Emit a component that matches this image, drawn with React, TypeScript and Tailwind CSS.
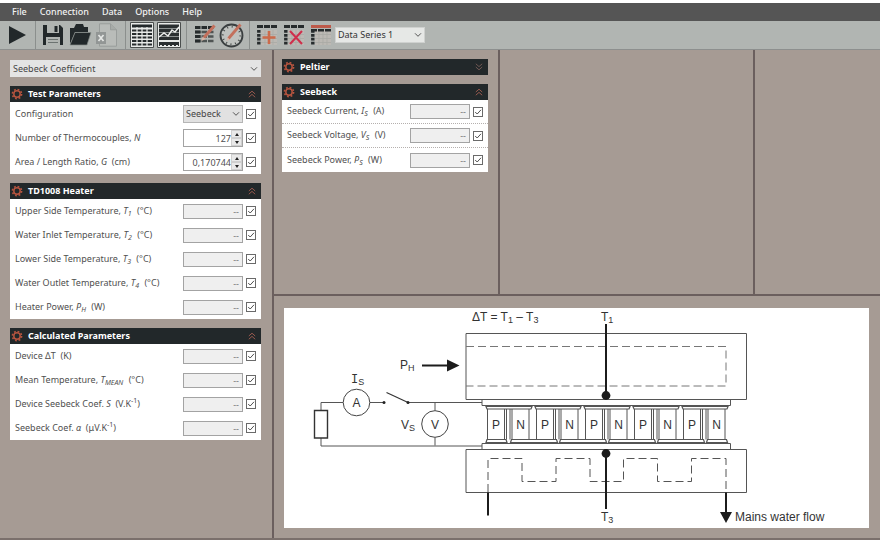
import { useState, type ReactNode } from "react";

const MENU = ["File", "Connection", "Data", "Options", "Help"];

type Row = {
  id: string;
  label: ReactNode;
  name: string;
};

const Sym = ({ children, sub }: { children: ReactNode; sub?: string }) => (
  <i>
    {children}
    {sub && <span className="relative top-[2px] mr-[3px] text-[7px]">{sub}</span>}
  </i>
);

const Sup = ({ children }: { children: ReactNode }) => (
  <span className="relative -top-1 text-[7px]">{children}</span>
);

const HEATER_ROWS: Row[] = [
  { id: "t1", name: "Upper Side Temperature", label: <>Upper Side Temperature, <Sym sub="1">T</Sym> (°C)</> },
  { id: "t2", name: "Water Inlet Temperature", label: <>Water Inlet Temperature, <Sym sub="2">T</Sym> (°C)</> },
  { id: "t3", name: "Lower Side Temperature", label: <>Lower Side Temperature, <Sym sub="3">T</Sym> (°C)</> },
  { id: "t4", name: "Water Outlet Temperature", label: <>Water Outlet Temperature, <Sym sub="4">T</Sym> (°C)</> },
  { id: "ph", name: "Heater Power", label: <>Heater Power, <Sym sub="H">P</Sym> (W)</> },
];

const CALCULATED_ROWS: Row[] = [
  { id: "dt", name: "Device ΔT", label: <>Device ΔT  (K)</> },
  { id: "tmean", name: "Mean Temperature", label: <>Mean Temperature, <Sym sub="MEAN">T</Sym> (°C)</> },
  { id: "s", name: "Device Seebeck Coef.", label: <>Device Seebeck Coef. <Sym>S</Sym>  (V.K<Sup>-1</Sup>)</> },
  { id: "alpha", name: "Seebeck Coef.", label: <>Seebeck Coef. <Sym>α</Sym>  (μV.K<Sup>-1</Sup>)</> },
];

const SEEBECK_ROWS: Row[] = [
  { id: "is", name: "Seebeck Current", label: <>Seebeck Current, <Sym sub="S">I</Sym> (A)</> },
  { id: "vs", name: "Seebeck Voltage", label: <>Seebeck Voltage, <Sym sub="S">V</Sym> (V)</> },
  { id: "ps", name: "Seebeck Power", label: <>Seebeck Power, <Sym sub="S">P</Sym> (W)</> },
];

/* ---------- small controls ---------- */

function Chevron() {
  return (
    <svg viewBox="0 0 8 5" className="pointer-events-none absolute top-1/2 right-[3px] h-[5px] w-2 -translate-y-1/2" fill="none" stroke="#555" strokeWidth="1">
      <path d="M1 .8 4 3.8 7 .8" />
    </svg>
  );
}

function Check({ name }: { name: string }) {
  return (
    <span className="relative ml-[3px] h-[10px] w-[10px] shrink-0">
      <input
        type="checkbox"
        defaultChecked
        aria-label={`Show ${name}`}
        className="peer block h-[10px] w-[10px] appearance-none border border-[#6a6a6a] bg-white"
      />
      <svg viewBox="0 0 10 10" className="pointer-events-none absolute inset-0 hidden h-[10px] w-[10px] peer-checked:block" fill="none" stroke="#505050" strokeWidth="1">
        <path d="M2.2 5 4.2 7 8 2.8" />
      </svg>
    </span>
  );
}

function Line({ id, label, name, dotted, children }: Row & { dotted?: boolean; children?: ReactNode }) {
  return (
    <div className={`flex h-6 items-center px-[5px] ${dotted ? "border-b border-dotted border-[#b5b0ae] last:border-b-0" : ""}`}>
      <label htmlFor={id} className="flex-1 whitespace-pre text-[#505050]">
        {label}
      </label>
      {children ?? (
        <input
          id={id}
          readOnly
          value="--"
          className="h-[15px] w-[60px] border border-[#a3a3a3] bg-[#efefef] pr-[3px] text-right text-[#777] outline-none"
        />
      )}
      <Check name={name} />
    </div>
  );
}

function Spin({ id, value }: { id: string; value: string }) {
  return (
    <div className="flex h-[18px] w-[60px] items-center border border-[#a3a3a3] bg-white">
      <input id={id} defaultValue={value} className="h-full w-0 flex-1 text-right text-[#505050] outline-none" />
      <div className="flex h-full w-[11px] flex-col bg-[#e9e9e9]">
        <button aria-label="Increase" className="flex flex-1 items-center justify-center border border-[#cfcfcf]">
          <svg viewBox="0 0 4 3" className="h-[3px] w-1"><path d="M0 3 2 0 4 3z" fill="#222" /></svg>
        </button>
        <button aria-label="Decrease" className="flex flex-1 items-center justify-center border border-[#cfcfcf]">
          <svg viewBox="0 0 4 3" className="h-[3px] w-1"><path d="M0 0 2 3 4 0z" fill="#222" /></svg>
        </button>
      </div>
    </div>
  );
}

function Gear() {
  return (
    <svg viewBox="0 0 12 12" className="h-3 w-3" fill="none" stroke="#b5543f">
      <circle cx="6" cy="6" r="3.2" strokeWidth="1.5" />
      <circle cx="6" cy="6" r="4.6" strokeWidth="1.6" strokeDasharray="1.8 1.81" />
    </svg>
  );
}

function Section({ title, open = true, children }: { title: string; open?: boolean; children?: ReactNode }) {
  const [expanded, setExpanded] = useState(open);
  return (
    <section>
      <button
        onClick={() => setExpanded((v) => !v)}
        aria-expanded={expanded}
        className="flex h-4 w-full items-center bg-[#22282a] pr-[5px] pl-px text-left font-bold text-white"
      >
        <Gear />
        <span className="flex-1 pl-[5px]">{title}</span>
        <svg viewBox="0 0 8 8" className={`h-2 w-2 ${expanded ? "" : "rotate-180"}`} fill="none" stroke={expanded ? "#96594e" : "#6f5753"} strokeWidth="1">
          <path d="M.8 4 4 1.2 7.2 4M.8 7.2 4 4.4 7.2 7.2" />
        </svg>
      </button>
      {expanded && children && <div className="bg-white">{children}</div>}
    </section>
  );
}

/* ---------- toolbar ---------- */

function Tool({ label, className = "", children }: { label: string; className?: string; children: ReactNode }) {
  return (
    <button aria-label={label} className={`flex h-[26px] shrink-0 items-center justify-center ${className}`}>
      {children}
    </button>
  );
}

const Divider = () => <span className="h-7 w-px shrink-0 bg-[#8b8f8d]" />;

function SheetIcon({ children, cleared = false }: { children?: ReactNode; cleared?: boolean }) {
  return (
    <svg viewBox="0 0 22 22" className="h-[22px] w-[22px]">
      <path d="M5 6h16v15H5z" fill="#bcb9b4" />
      <path d="M5 10.5h16M5 14.5h16M5 18.5h16M9 6v15M13 6v15M17 6v15" stroke="#a9a9a4" strokeWidth=".8" />
      {cleared ? (
        <>
          <path d="M1 2.5h20" stroke="#bd5a4a" strokeWidth="3" />
          <path d="M1 6.3h20" stroke="#262b2c" strokeWidth="2.6" strokeDasharray="6 1" />
        </>
      ) : (
        <path d="M1 2.5h20" stroke="#262b2c" strokeWidth="3" strokeDasharray="6 1" />
      )}
      <path d="M2.8 6v15.5" stroke="#262b2c" strokeWidth="3.4" strokeDasharray="2.8 1.1" />
      {children}
    </svg>
  );
}

function Toolbar() {
  return (
    <div className="flex h-[29px] items-center border-b border-[#8d8f8e] bg-[#b1b5b2]">
      <Tool label="Run" className="w-[35px]">
        <svg viewBox="0 0 17 18" className="h-[18px] w-[17px]"><path d="M0 0 17 9 0 18z" fill="#22282a" /></svg>
      </Tool>
      <Divider />
      <Tool label="Save" className="ml-1 w-[26px]">
        <svg viewBox="0 0 22 22" className="h-[22px] w-[22px]">
          <path d="M1 1h17l3 3v17H1z" fill="#22282a" />
          <path d="M5 1h12v8H5zM4 13h14v8H4z" fill="#b1b5b2" />
          <path d="M12.5 2h3v6h-3z" fill="#22282a" />
          <path d="M6 15.5h10M6 18.5h10" stroke="#6c7371" />
        </svg>
      </Tool>
      <Tool label="Open" className="w-7">
        <svg viewBox="0 0 24 24" className="h-6 w-6">
          <path d="M2 21V5h4l2-4h7l1 3h4v5H7z" fill="#22282a" />
          <path d="M2 22 7 9.5h16L19 22z" fill="#22282a" stroke="#878c8a" strokeWidth=".7" />
        </svg>
      </Tool>
      <Tool label="Export to Excel" className="mr-[5px] w-[26px]">
        <svg viewBox="0 0 22 24" className="h-6 w-[22px]">
          <path d="M3.5.8h11l6 6v16.4h-17z" fill="#b9bcb9" stroke="#999d9b" />
          <path d="M14.5.8v6h6" fill="#a7aba8" stroke="#999d9b" />
          <path d="M0 9h10v12H0z" fill="#929695" />
          <path d="m2.5 12 5 6m0-6-5 6" stroke="#e5e7e5" strokeWidth="1.7" />
        </svg>
      </Tool>
      <Divider />
      <Tool label="Table view" className="ml-[3px] w-[26px]">
        <svg viewBox="0 0 24 26" className="h-[26px] w-6">
          <path d="M.5.5h23v25H.5z" fill="#e8eae8" stroke="#4b4f4e" />
          <path d="M2 2.5h20v3H2z" fill="#22282a" />
          <path d="M2 8.5h20M2 12h20M2 15.5h20M2 19h20M2 22.5h20" stroke="#262b2c" strokeWidth="2" />
          <path d="M7 5v20M12 5v20M17 5v20" stroke="#e8eae8" strokeWidth="1.2" />
        </svg>
      </Tool>
      <Tool label="Chart view" className="mr-1 w-[27px]">
        <svg viewBox="0 0 24 26" className="h-[26px] w-6">
          <path d="M.5.5h23v25H.5z" fill="#e8eae8" stroke="#4b4f4e" />
          <path d="M2 2.5h20V18H2zM2 20h20v4H2z" fill="#2a2f30" />
          <path d="M2 6.5h20M2 10.5h20M2 14.5h20" stroke="#8b908f" />
          <path d="m2 15 5-4 4 3 4-6 3 2 4-5" fill="none" stroke="#eceeec" strokeWidth="1.5" />
          <path d="M3 24h19" stroke="#e8eae8" strokeWidth="2" strokeDasharray="2 2" />
        </svg>
      </Tool>
      <Divider />
      <Tool label="Edit table" className="ml-[5px] w-[26px]">
        <svg viewBox="0 0 22 22" className="h-[22px] w-[22px]">
          <path d="M1 8h19M1 12.5h19M1 17h19" stroke="#4f5453" strokeWidth="2.6" strokeDasharray="5.5 1" />
          <path d="M1 3.5h19M1 8h5.5M1 12.5h5.5M1 17h5.5" stroke="#262b2c" strokeWidth="3" strokeDasharray="5.5 1" />
          <path d="m10 13.500 10.5-12" stroke="#c3705c" strokeWidth="3" />
          <path d="m7.5 17 1-4.5 3 2.5z" fill="#d9b6a7" />
        </svg>
      </Tool>
      <Tool label="Sampling time" className="mr-1 w-[27px]">
        <svg viewBox="0 0 25 26" className="h-[26px] w-[25px]" fill="none">
          <circle cx="12.5" cy="13.5" r="11" fill="#bfc2bf" stroke="#3a3f40" strokeWidth="1.8" />
          <circle cx="12.5" cy="13.5" r="8.8" stroke="#444948" strokeWidth="2" strokeDasharray="1 3.6" />
          <path d="m9.500 16.500 12-14" stroke="#c3705c" strokeWidth="2.8" />
          <path d="m7.5 19 .8-3.500 2.400 2z" fill="#d9b6a7" />
        </svg>
      </Tool>
      <Divider />
      <Tool label="Add row" className="ml-1 w-[26px]">
        <SheetIcon><path d="M13 7v13M6.5 13.5h13" stroke="#cc6a4a" strokeWidth="2.6" /></SheetIcon>
      </Tool>
      <Tool label="Delete row" className="w-7">
        <SheetIcon><path d="m7 7 12 13M19 7 7 20" stroke="#cf2f4c" strokeWidth="2" /></SheetIcon>
      </Tool>
      <Tool label="Clear table" className="w-[26px]">
        <SheetIcon cleared />
      </Tool>
      <div className="relative ml-px h-4 w-[90px]">
        <select aria-label="Data series" className="block h-4 w-full appearance-none border border-[#cfd1cf] bg-[#e6e8e6] pl-[2px] leading-[14px] text-[#333]">
          <option>Data Series 1</option>
        </select>
        <Chevron />
      </div>
    </div>
  );
}

/* ---------- schematic ---------- */

const PILLARS = Array.from({ length: 10 }, (_, i) => 212 + i * 24.5);
const TOP_CAPS = [0, 1, 2, 3, 4].map((i) => 202 + i * 49);
const BOTTOM_CAPS = [1, 2, 3, 4].map((i) => 177.5 + i * 49);

const Sub = ({ children }: { children: string }) => (
  <tspan dy="2" className="text-[9px]">{children}</tspan>
);

function Schematic() {
  return (
    <svg viewBox="0 0 585 220" role="img" aria-label="Seebeck test circuit" className="block w-full bg-white font-['Liberation_Sans',Arial,sans-serif] text-[12px]" fill="none" stroke="#555" strokeWidth="1">
      {/* hot and cold blocks */}
      <path d="M182 25.5h280.5v66H182zM182 141.5h280.5v43H182z" />
      <path d="M198 91.5h248.5v6H198zM198 135.5h248.5v6H198z" />
      <path d="M182 38.5h260v39.5H182" strokeDasharray="8 4" stroke="#777" />
      <path d="M204 184v-33.5h34v23h34v-23h34v23h33.5v-23h34v23h34v-23H442V184" strokeDasharray="8 4" />

      {/* thermocouple pairs */}
      {TOP_CAPS.map((x) => (
        <path key={x} d={`M${x} 98.5h46l-1 2.5h-44z`} strokeWidth="1.2" />
      ))}
      {BOTTOM_CAPS.map((x) => (
        <path key={x} d={`M${x + 1} 131.5h45l1 3h-47z`} strokeWidth="1.2" />
      ))}
      <path d="M203 131.5h19l1 3h-21zM423.5 131.5h19l1 3h-21z" strokeWidth="1.2" />
      {PILLARS.map((x, i) => (
        <g key={x}>
          <path d={`M${x - 8.5} 101v30.5M${x + 8.5} 101v30.5`} />
          <path d={i % 2 ? `M${x - 10.5} 101v30.5` : `M${x + 10.5} 101v30.5`} />
          <text x={x} y="121" textAnchor="middle" fill="#333" stroke="none">{i % 2 ? "N" : "P"}</text>
        </g>
      ))}

      {/* external circuit */}
      <path d="M37 102.5v-8h22M86 94.5h14M124 94.5h74M37 130v8h161M151 94.5v8M151 129.5v8" />
      <path d="M30.5 102.5h13V130h-13z" strokeWidth="1.4" stroke="#333" />
      <path d="M102.5 84.5 124 94.5" strokeWidth="1.2" stroke="#333" />
      <circle cx="72.5" cy="94.5" r="13.3" stroke="#444" />
      <circle cx="151" cy="116" r="13.3" stroke="#444" />
      <circle cx="100" cy="94.5" r="1.5" fill="#222" stroke="none" />
      <circle cx="124" cy="94.5" r="1.5" fill="#222" stroke="none" />

      {/* probes and arrows */}
      <path d="M322 16v71M322 145v56M204 184.5v23M442 184.5V205M138 57.5h26" stroke="#1c1c1c" strokeWidth="2" />
      <g fill="#1c1c1c" stroke="none">
        <circle cx="322" cy="87.5" r="4.4" />
        <circle cx="322" cy="145.5" r="4.4" />
        <path d="M163 51.5 175.5 57.5 163 63.5zM436 204h12l-6 11z" />
      </g>

      <g fill="#333" stroke="none">
        <text x="188" y="13">ΔT = T<Sub>1</Sub><tspan dy="-2"> – T</tspan><Sub>3</Sub></text>
        <text x="317" y="13">T<Sub>1</Sub></text>
        <text x="317" y="213">T<Sub>3</Sub></text>
        <text x="116" y="61">P<Sub>H</Sub></text>
        <text x="67" y="75"><tspan className="font-['Liberation_Mono',monospace]">I</tspan><Sub>S</Sub></text>
        <text x="117" y="121">V<Sub>S</Sub></text>
        <text x="72.5" y="99" textAnchor="middle">A</text>
        <text x="151" y="120.5" textAnchor="middle">V</text>
        <text x="451" y="213">Mains water flow</text>
      </g>
    </svg>
  );
}

export default function App() {
  return (
    <div className="flex min-h-screen flex-col bg-[#a69b94] font-['Noto_Sans',sans-serif] text-[9px] leading-3">
      <nav className="flex h-[21px] items-center gap-[5px] border-t-[3px] border-white bg-[#555555] pl-2 font-medium text-[#f2f2f2]">
        {MENU.map((item) => (
          <button key={item} className="px-1">{item}</button>
        ))}
      </nav>
      <Toolbar />

      <main className="grid flex-1 grid-cols-[272px_1fr] border-b-2 border-[#7b706c]">
        <aside className="flex flex-col gap-[9px] pt-[10px] pr-[11px] pl-[10px]">
          <div className="relative h-[17px]">
            <select aria-label="Experiment" className="block h-[17px] w-full appearance-none bg-[#e4e4e4] pl-[3px] leading-[17px] text-[#444]">
              <option>Seebeck Coefficient</option>
            </select>
            <Chevron />
          </div>
          <Section title="Test Parameters">
            <Line id="config" name="Configuration" label="Configuration">
              <div className="relative h-[18px] w-[60px]">
                <select id="config" className="block h-[18px] w-full appearance-none border border-[#b5b5b5] bg-[#e1e1e1] pl-[2px] text-[#444]">
                  <option>Seebeck</option>
                </select>
                <Chevron />
              </div>
            </Line>
            <Line id="count" name="Number of Thermocouples" label={<>Number of Thermocouples, <Sym>N</Sym></>}>
              <Spin id="count" value="127" />
            </Line>
            <Line id="ratio" name="Area / Length Ratio" label={<>Area / Length Ratio, <Sym>G</Sym>  (cm)</>}>
              <Spin id="ratio" value="0,170744" />
            </Line>
          </Section>
          <Section title="TD1008 Heater">
            {HEATER_ROWS.map((row) => <Line key={row.id} {...row} />)}
          </Section>
          <Section title="Calculated Parameters">
            {CALCULATED_ROWS.map((row) => <Line key={row.id} {...row} />)}
          </Section>
        </aside>

        <div className="flex flex-col border-l-2 border-[#6b5f5e]">
          <div className="grid min-h-[246px] grid-cols-[226px_255fr_125fr] border-b-2 border-[#6b5f5e]">
            <div className="flex flex-col gap-[9px] border-r-2 border-[#6b5f5e] pt-[9px] pr-[10px] pl-2">
              <Section title="Peltier" open={false} />
              <Section title="Seebeck">
                {SEEBECK_ROWS.map((row) => <Line key={row.id} {...row} dotted />)}
              </Section>
            </div>
            <div className="border-r-2 border-[#6b5f5e]" />
            <div />
          </div>
          <div className="pt-3 pr-[11px] pb-[10px] pl-[10px]">
            <Schematic />
          </div>
        </div>
      </main>
    </div>
  );
}
